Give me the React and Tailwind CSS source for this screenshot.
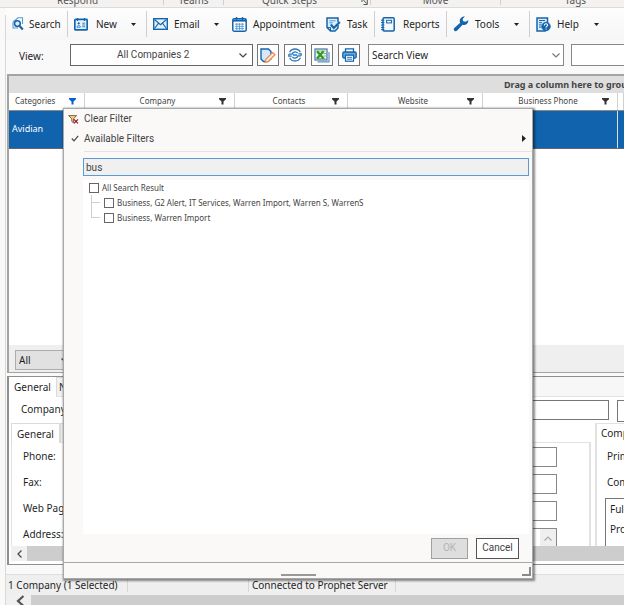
import React from "react";

const BLUE = "#1464ac";

function SearchIcon() {
  return (
    <svg width="12" height="14" viewBox="0 0 12 14" fill="none" stroke={BLUE} strokeWidth="1.1">
      <path d="M3.5 4V3L6 .8h4.5V7" stroke="#5a9bd0" />
      <path d="M3 3.2A3 3 0 0 0 1 6v5h5" stroke="#5a9bd0" />
      <circle cx="5.4" cy="6.6" r="2.9" fill="#dcebf8" strokeWidth="1.5" />
      <path d="M7.6 9l3.2 3.4" strokeWidth="2.2" />
    </svg>
  );
}
function NewIcon() {
  return (
    <svg width="14" height="13" viewBox="0 0 14 13" fill="none" stroke={BLUE}>
      <rect x=".8" y="1.3" width="12.4" height="10.6" rx="1" fill="#e6f1fb" strokeWidth="1.7" />
      <path d="M3.5 0v3M10.5 0v3" strokeWidth="1.3" />
      <circle cx="4.7" cy="5.4" r=".8" fill={BLUE} strokeWidth=".6" />
      <path d="M3 9.2c0-2.4 3.4-2.4 3.4 0zM8.2 5.2h3M8.2 7h3M8.2 8.8h3" stroke="#3d85c4" strokeWidth="1" />
    </svg>
  );
}
function MailIcon() {
  return (
    <svg width="15" height="12" viewBox="0 0 15 12" fill="none" stroke={BLUE}>
      <rect x=".7" y=".7" width="13.6" height="10.6" fill="#e4effa" strokeWidth="1.4" />
      <path d="M1.5 1.5l6 5.2 6-5.2M1.5 10.5L5.4 5.4M13.5 10.5L9.6 5.4" strokeWidth="1.1" />
    </svg>
  );
}
function CalendarIcon() {
  return (
    <svg width="15" height="15" viewBox="0 0 15 15" fill="none" stroke={BLUE}>
      <rect x=".8" y="1.8" width="13.4" height="12.4" rx="1.4" fill="#fff" strokeWidth="1.5" />
      <path d="M1 3.6h13" strokeWidth="2" />
      <path d="M4.5 0v3.4M10.5 0v3.4" strokeWidth="1.4" />
      <path d="M3 7.2h9M3 9.4h9M3 11.6h9M4.8 6v7M7.5 6v7M10.2 6v7" stroke="#5a9bd0" strokeWidth=".9" />
    </svg>
  );
}
function TaskIcon() {
  return (
    <svg width="15" height="15" viewBox="0 0 15 15" fill="none" stroke={BLUE}>
      <path d="M12 5V1H1v9.500L4.500 14H9l3-3V8" fill="#dcebf8" strokeWidth="1.5" />
      <path d="M1 10.5h3.5V14" strokeWidth="1" />
      <path d="M3.3 3.8h6.4M3.3 5.8h3.5" stroke="#5a9bd0" />
      <path d="M4.8 7.6l3 3.4 6-6" strokeWidth="2.2" />
    </svg>
  );
}
function ReportIcon() {
  return (
    <svg width="14" height="15" viewBox="0 0 14 15" fill="none" stroke={BLUE}>
      <rect x="2" y=".8" width="11.2" height="13.2" rx="1.2" fill="#f4f9fd" strokeWidth="1.5" />
      <path d="M0 3.2h3.4M0 5.6h3.4M0 8h3.4M0 10.4h3.4M0 12.6h3.4" strokeWidth="1" />
      <rect x="5.6" y="3.3" width="5" height="2.6" strokeWidth="1" />
    </svg>
  );
}
function WrenchIcon() {
  return (
    <svg width="16" height="16" viewBox="0 0 16 16">
      <path
        fill={BLUE}
        d="M15.3 4.2a4.3 4.3 0 0 1-5.7 4.6L4.2 14.6a1.9 1.9 0 0 1-2.9-2.6l5.9-5.3A4.3 4.3 0 0 1 11.9.6L9.6 3l.6 2.3 2.4.5z"
      />
    </svg>
  );
}
function HelpIcon() {
  return (
    <svg width="15" height="15" viewBox="0 0 15 15" fill="none" stroke={BLUE}>
      <path d="M1 1h10.5v11L9 14H1z" fill="#dcebf8" strokeWidth="1.5" />
      <path d="M3 3.5h6M3 5.7h3M3 7.9h2.5M3 10.1h2.5" strokeWidth="1" />
      <circle cx="10" cy="9.5" r="4.3" fill={BLUE} strokeWidth=".8" />
      <path d="M8.4 8.4c0-2.2 3.3-2 3.2-.1 0 1.1-1.6 1.1-1.6 2.3M10 11.4v1" stroke="#fff" strokeWidth="1.1" />
    </svg>
  );
}
function EditIcon() {
  return (
    <svg width="16" height="15" viewBox="0 0 16 15" fill="none">
      <path d="M1 1h7.5L11 3.5V11L8 13.5H3.5L1 11z" fill="#d5e8f8" stroke={BLUE} strokeWidth="1.4" />
      <path d="M12.6 4.6l2.4 2.2-6.8 6.6-3 .9.7-3z" fill="#fff3ea" stroke="#ef8a52" strokeWidth="1.3" />
    </svg>
  );
}
function SyncIcon() {
  return (
    <svg width="14" height="14" viewBox="0 0 14 14" fill="none" stroke="#2c78ba" strokeWidth="1.3">
      <path d="M1.600 4.200C2.600 2.200 4.600 1 7 1s4.400 1.200 5.400 3.200M12.400 9.800C11.400 11.800 9.400 13 7 13s-4.400-1.200-5.400-3.200" />
      <path d="M1 6.200h3.200C4.600 4.700 5.700 3.900 7.200 3.900c1 0 1.900.5 2.500 1.300M13 7.800H9.800c-.4 1.500-1.500 2.300-3 2.300-1 0-1.900-.5-2.500-1.300" />
      <path d="M.8 6.200v2h3M13.200 7.800v-2h-3M5 7h4" />
    </svg>
  );
}
function ExcelIcon() {
  return (
    <svg width="16" height="15" viewBox="0 0 16 15" fill="none">
      <path d="M3.500 13.800H15V4" stroke="#5a8fc0" strokeWidth="1.200" />
      <rect x="1" y="1" width="12" height="11" fill="#eef6ea" stroke="#3f74a8" strokeWidth="1.200" />
      <path d="M2.500 3h9M2.500 10.500h9M9.500 5.500h2.500M9.500 8h2.500" stroke="#7dbb6a" />
      <path d="M3 3.200l6.500 7.300M9.500 3.200L3 10.500" stroke="#2f962a" strokeWidth="2.300" />
    </svg>
  );
}
function PrintIcon() {
  return (
    <svg width="15" height="14" viewBox="0 0 15 14" fill="none" stroke={BLUE}>
      <path d="M3.500 4V.8h8V4" fill="#fff" strokeWidth="1.300" />
      <rect x=".8" y="4" width="13.400" height="6" rx="1.200" fill="#6ba6d8" strokeWidth="1.300" />
      <rect x="3.500" y="7.200" width="8" height="6" fill="#fff" strokeWidth="1.200" />
      <path d="M5 9.300h5M5 11.200h5" strokeWidth=".9" />
    </svg>
  );
}
function Funnel({ color = "#333" }) {
  return (
    <svg width="7" height="7" viewBox="0 0 7 7" className="shrink-0">
      <path d="M0 0h7v1.300L4.500 3.600V6.600h-2V3.600L0 1.300z" fill={color} />
    </svg>
  );
}
function ClearFilterIcon() {
  return (
    <svg width="11" height="9" viewBox="0 0 11 9" fill="none">
      <path d="M.6.6h8L5.600 3.800v4L3.800 6.600V3.800z" fill="#f3d27a" stroke="#6b5a3a" strokeWidth=".9" />
      <path d="M6 4.400l4 4M10 4.400l-4 4" stroke="#a3182a" strokeWidth="1.300" />
    </svg>
  );
}
function Caret() {
  return (
    <svg width="5" height="3" viewBox="0 0 5 3">
      <path d="M0 0h5L2.500 3z" fill="#222" />
    </svg>
  );
}
function Chevron({ color = "#444", d = "M.5 .5l3.500 3.500L7.500 .5", w = 8, h = 5 }) {
  return (
    <svg width={w} height={h} viewBox={`0 0 ${w} ${h}`} fill="none">
      <path d={d} stroke={color} strokeWidth="1.200" />
    </svg>
  );
}

const tools = [
  { label: "Search", Icon: SearchIcon, box: "w-[61px] pl-[5px] gap-[5px] border-r" },
  { label: "New", Icon: NewIcon, box: "w-[79px] pl-1.5 gap-2 border-r", caret: "pr-[10px]" },
  { label: "Email", Icon: MailIcon, box: "w-[79px] pl-1.5 gap-1.5", caret: "pr-[7px]" },
  { label: "Appointment", Icon: CalendarIcon, box: "w-[94px] pl-1.5 gap-1.5" },
  { label: "Task", Icon: TaskIcon, box: "w-[55px] pl-1.5 gap-1.5 border-r" },
  { label: "Reports", Icon: ReportIcon, box: "w-[72px] pl-1.5 gap-2 border-r" },
  { label: "Tools", Icon: WrenchIcon, box: "w-[83px] pl-1.5 gap-1.5 border-r", caret: "pr-[10px]" },
  { label: "Help", Icon: HelpIcon, box: "w-[80px] pl-1.5 gap-1.5", caret: "pr-[11px]" },
];

const actions = [
  { label: "Edit view", Icon: EditIcon },
  { label: "Refresh", Icon: SyncIcon },
  { label: "Export to Excel", Icon: ExcelIcon },
  { label: "Print", Icon: PrintIcon },
];

const columns = ["Categories", "Company", "Contacts", "Website", "Business Phone", ""];

function Ribbon() {
  const group = "border-r border-[#d0cfce] flex h-[5px] shrink-0 items-center justify-center leading-none";
  return (
    <div className="h-2 shrink-0 overflow-hidden border-b border-[#dcdbda] bg-[#f3f2f1] text-[10px] text-[#555]">
      <div className="flex h-[5px] items-center whitespace-nowrap">
        <div className={`${group} w-[164px] pr-2`}><span className="-mt-1.5">Respond</span></div>
        <div className={`${group} w-[60px]`}><span className="-mt-1.5">Teams</span></div>
        <div className={`${group} w-[147px] justify-end gap-[44px] pr-0.5`}>
          <span className="-mt-1.5">Quick Steps</span>
          <svg width="7" height="5" viewBox="0 0 7 5" fill="none" stroke="#555"><path d="M1 0v2M2.500 0l3 3.500M6.300 0v4.500H2.500" /></svg>
        </div>
        <div className={`${group} w-[130px]`}><span className="-mt-1.5">Move</span></div>
        <div className="flex h-[5px] w-[149px] shrink-0 items-center justify-center leading-none"><span className="-mt-1.5">Tags</span></div>
      </div>
    </div>
  );
}

function Toolbar() {
  return (
    <div className="flex h-8 shrink-0 items-center overflow-hidden bg-gradient-to-b from-[#fdfdfd] to-[#f6f6f6] pl-px">
      {tools.map(({ label, Icon, box, caret }) => (
        <button key={label} className={`flex h-[26px] shrink-0 items-center border-[#cfcfcf] whitespace-nowrap ${box}`}>
          <Icon />
          <span>{label}</span>
          {caret && <span className={`ml-auto ${caret}`}><Caret /></span>}
        </button>
      ))}
    </div>
  );
}

function ViewBar() {
  return (
    <div className="flex h-[34px] shrink-0 items-start pt-1 pl-[13px]">
      <label htmlFor="view" className="w-[51px] shrink-0 pt-[5px]">View:</label>
      <div className="grid w-[183px] shrink-0 items-center">
        <select id="view" className="col-start-1 row-start-1 h-[22px] appearance-none border border-[#666] bg-white pl-[46px] font-[Roboto,sans-serif] text-[10px] text-[#444]">
          <option>All Companies 2</option>
        </select>
        <span className="pointer-events-none col-start-1 row-start-1 mr-1.5 justify-self-end"><Chevron /></span>
      </div>
      <div className="flex gap-[5px] pr-2 pl-1">
        {actions.map(({ label, Icon }) => (
          <button key={label} aria-label={label} className="flex h-[22px] w-[22px] items-center justify-center border border-[#777] bg-white">
            <Icon />
          </button>
        ))}
      </div>
      <div className="grid w-[196px] shrink-0 items-center">
        <select aria-label="Search view" className="col-start-1 row-start-1 h-[22px] appearance-none border border-[#888] bg-white pl-[3px] text-[10px]">
          <option>Search View</option>
        </select>
        <span className="pointer-events-none col-start-1 row-start-1 mr-1 justify-self-end"><Chevron color="#777" /></span>
      </div>
      <input aria-label="Search text" className="ml-[7px] h-[22px] min-w-0 flex-1 border border-r-0 border-[#888] bg-white" />
    </div>
  );
}

function CompanyGrid() {
  const cell = "border-r border-b border-[#d5dfe8] border-b-[#666]";
  return (
    <section className="flex h-[299px] shrink-0 flex-col overflow-hidden border-t-2 border-b border-l-2 border-[#a3a3a3] bg-white">
      <div className="h-[17px] shrink-0 overflow-hidden bg-[#dedede] pl-[495px] text-[9px] leading-[17px] font-bold whitespace-nowrap text-[#444]">
        Drag a column here to group by this column
      </div>
      <table className="w-full table-fixed border-collapse text-[8px] text-[#444]">
        <colgroup>
          <col className="w-[75px]" />
          <col className="w-[150px]" />
          <col className="w-[113px]" />
          <col className="w-[135px]" />
          <col className="w-[135px]" />
          <col />
        </colgroup>
        <thead>
          <tr className="h-[17px]">
            {columns.map((name, i) => (
              <th key={i} className="border-r border-b border-[#d0d0d0] border-b-[#8a8a8a] p-0 font-normal">
                {name && (
                  <div className="flex items-center pr-2">
                    <span className={i ? "flex-1 pl-3 text-center" : "flex-1 pl-1.5 text-left"}>{name}</span>
                    <Funnel color={i ? "#333" : "#0a5fd0"} />
                  </div>
                )}
              </th>
            ))}
          </tr>
        </thead>
        <tbody>
          <tr className="h-[38px] bg-[#1263ad] text-[9px] text-white">
            <td className={`${cell} py-0 pl-[3px]`}>Avidian</td>
            <td className={cell} />
            <td className={cell} />
            <td className={cell} />
            <td className={cell} />
            <td className="border-b border-b-[#666]" />
          </tr>
        </tbody>
      </table>
      <div className="mt-auto h-[27px] bg-[#efefef] px-1.5 pt-[5px]">
        <div className="grid w-[58px] items-center">
          <select aria-label="Page" className="col-start-1 row-start-1 h-5 appearance-none border border-[#adadad] bg-[#e1e1e1] pl-[3px] text-[10px]">
            <option>All</option>
          </select>
          <span className="pointer-events-none col-start-1 row-start-1 mr-1 justify-self-end"><Chevron /></span>
        </div>
      </div>
    </section>
  );
}

const fields = [
  { id: "phone", label: "Phone:" },
  { id: "fax", label: "Fax:" },
  { id: "web", label: "Web Page:" },
  { id: "address", label: "Address:" },
];

function Details() {
  return (
    <section className="mt-[3px] flex h-[189px] shrink-0 flex-col overflow-hidden border-t border-b border-l-2 border-[#8f8f8f] bg-white whitespace-nowrap">
      <div className="flex h-5 shrink-0 border-b border-[#e2e2e2] bg-[#f7f7f7]">
        <button className="-mb-px w-[47px] bg-white">General</button>
        <button className="border border-b-0 border-[#dadada] bg-[#f0f0f0] px-0.5">Notes</button>
      </div>
      <div className="flex h-[26px] shrink-0 items-start pt-[3px] pl-3">
        <label htmlFor="company" className="w-[60px] pt-0.5">Company:</label>
        <input id="company" className="h-5 w-[528px] shrink-0 border border-[#777]" />
        <input aria-label="Company details" className="ml-2 h-[22px] min-w-0 flex-1 border border-r-0 border-[#777]" />
      </div>
      <div className="flex h-[123px] shrink-0 gap-1 overflow-hidden pl-0.5">
        <div className="w-[580px] shrink-0">
          <div className="flex h-5">
            <button className="w-[49px] border border-b-0 border-[#dadada] bg-white">General</button>
            <div className="flex flex-1 border-b border-[#e2e2e2]"><span className="w-14 border border-b-0 border-[#dadada] bg-[#f0f0f0]" /></div>
          </div>
          <div className="flex h-[120px] border-r-2 border-l border-[#e2e2e2] pl-[11px]">
            <div className="flex w-[60px] flex-col">
              {fields.map(({ id, label }) => (
                <label key={id} htmlFor={id} className="h-[26px] leading-[26px]">{label}</label>
              ))}
            </div>
            <div className="flex flex-1 flex-col gap-[7px] pt-1 pr-8">
              {fields.slice(0, 3).map(({ id }) => (
                <input key={id} id={id} className="h-5 shrink-0 border border-[#888]" />
              ))}
              <div className="flex h-10 shrink-0 border border-[#888]">
                <textarea id="address" className="flex-1 resize-none" />
                <button aria-label="Scroll up" className="flex w-4 justify-center bg-[#efefef] pt-[7px]">
                  <Chevron color="#aaa" d="M.5 4.500L4 1l3.500 3.500" />
                </button>
              </div>
            </div>
          </div>
        </div>
        <div className="flex-1 overflow-hidden border-t border-l-2 border-[#e2e2e2] pl-1">
          <div className="h-[19px] leading-[19px]">Company</div>
          <div className="h-[26px] pl-1.5 leading-[26px]">Primary</div>
          <div className="h-[26px] pl-1.5 leading-[26px]">Company</div>
          <div className="mt-[3px] ml-1 h-[60px] border border-r-0 border-[#777] pl-1">
            <div className="h-5 leading-5">Full Name</div>
            <div className="h-5 leading-5">Profile</div>
          </div>
        </div>
      </div>
      <div className="ml-0.5 flex h-[15px] shrink-0 bg-[#cdcdcd]">
        <button aria-label="Scroll left" className="flex w-4 items-center justify-center bg-[#f0f0f0]">
          <Chevron w={5} h={8} d="M4.500 .5L1 4l3.500 3.500" />
        </button>
      </div>
    </section>
  );
}

function StatusBar() {
  return (
    <footer className="mt-[9px] shrink-0 border-t border-[#dedede] bg-[#efefef]">
      <div className="flex h-5 items-center whitespace-nowrap">
        <span className="w-[122px] border-r border-[#d8d8d8] pl-0.5">1 Company (1 Selected)</span>
        <span className="w-[121px] border-r border-[#d8d8d8]">&nbsp;</span>
        <span className="w-[147px] border-r border-[#d8d8d8] pl-[3px]">Connected to Prophet Server</span>
      </div>
      <div className="flex h-[11px] bg-[#cdcdcd]">
        <button aria-label="Scroll page left" className="flex w-[25px] items-start justify-end bg-[#f0f0f0] pr-1.5">
          <svg width="9" height="12" viewBox="0 0 9 12" fill="none"><path d="M7.500 1L2 6l5.500 5" stroke="#555" strokeWidth="2.200" /></svg>
        </button>
      </div>
    </footer>
  );
}

const results = [
  "Business, G2 Alert, IT Services, Warren Import, Warren S, WarrenS",
  "Business, Warren Import",
];
const box = "m-0 size-[10px] shrink-0 appearance-none border border-[#666] bg-white";

function FilterMenu() {
  return (
    <div className="absolute top-[108px] left-[63px] flex h-[471px] w-[470px] flex-col border border-[#a8a8a8] bg-[#faf9f8] font-[Roboto,sans-serif] text-[10px] text-[#444] shadow-[1px_1px_2px_1px_rgba(0,0,0,0.45)]">
      <button className="flex h-5 items-center pl-1 text-left">
        <span className="w-4"><ClearFilterIcon /></span>Clear Filter
      </button>
      <button className="flex h-[19px] items-center pr-1.5 pl-[7px] text-left">
        <span className="w-[13px]"><Chevron w={8} h={7} d="M.8 3.500l2.200 2.300L7.200 .8" /></span>Available Filters
        <svg className="ml-auto" width="4" height="7" viewBox="0 0 4 7"><path d="M0 0l4 3.500L0 7z" fill="#222" /></svg>
      </button>
      <hr className="mt-[3px] ml-5 border-[#e4e3e2]" />
      <input aria-label="Search filters" defaultValue="bus" autoFocus className="mt-1.5 mr-[3px] ml-[19px] h-[18px] shrink-0 border border-[#5b9bd5] bg-[#f0f0f0] pl-0.5 text-[10px] outline-none" />
      <div className="mt-1 mr-[3px] ml-[19px] h-[354px] bg-white pl-1.5 font-['Noto_Sans','Open_Sans',sans-serif] text-[8px]">
        <label className="flex h-[15px] items-center gap-[3px]"><input type="checkbox" className={box} />All Search Result</label>
        <ul className="pl-0.5">
          {results.map((name) => (
            <li key={name} className="group flex h-[15px]">
              <span className="h-[15px] w-[9px] border-l border-[#cfcfcf] group-last:h-2">
                <span className="block h-2 border-b border-[#cfcfcf]" />
              </span>
              <label className="flex items-center gap-[3px] pl-1"><input type="checkbox" className={box} />{name}</label>
            </li>
          ))}
        </ul>
      </div>
      <div className="flex h-7 items-center justify-end gap-2 pr-[13px]">
        <button disabled className="h-[21px] w-[37px] border border-[#a0a0a0] bg-[#dedede] text-[#b4b4b4]">OK</button>
        <button className="h-[21px] w-[43px] border border-[#555] bg-white">Cancel</button>
      </div>
      <div className="grid flex-1 grid-cols-[1fr_auto_1fr] items-end border-t border-[#a8a8a8]">
        <span />
        <span className="mb-0.5 h-0.5 w-[35px] bg-[#999]" />
        <span className="mr-px mb-0.5 size-[9px] justify-self-end border-r-2 border-b-2 border-[#8a8a8a]" />
      </div>
    </div>
  );
}

export default function App() {
  return (
    <main className="relative flex h-screen flex-col overflow-hidden bg-[#faf9f8] font-['Noto_Sans','Open_Sans',sans-serif] text-[10px] leading-[14px] text-[#1f1f1f]">
      <Ribbon />
      <div className="flex min-h-0 flex-1">
        <div className="mt-[7px] w-1.5 shrink-0 border-r border-[#d8d8d8]" />
        <div className="flex min-w-0 flex-1 flex-col bg-[#f9f9f9]">
          <Toolbar />
          <ViewBar />
          <div className="flex flex-col pl-px">
            <CompanyGrid />
            <Details />
          </div>
          <StatusBar />
        </div>
      </div>
      <FilterMenu />
    </main>
  );
}
